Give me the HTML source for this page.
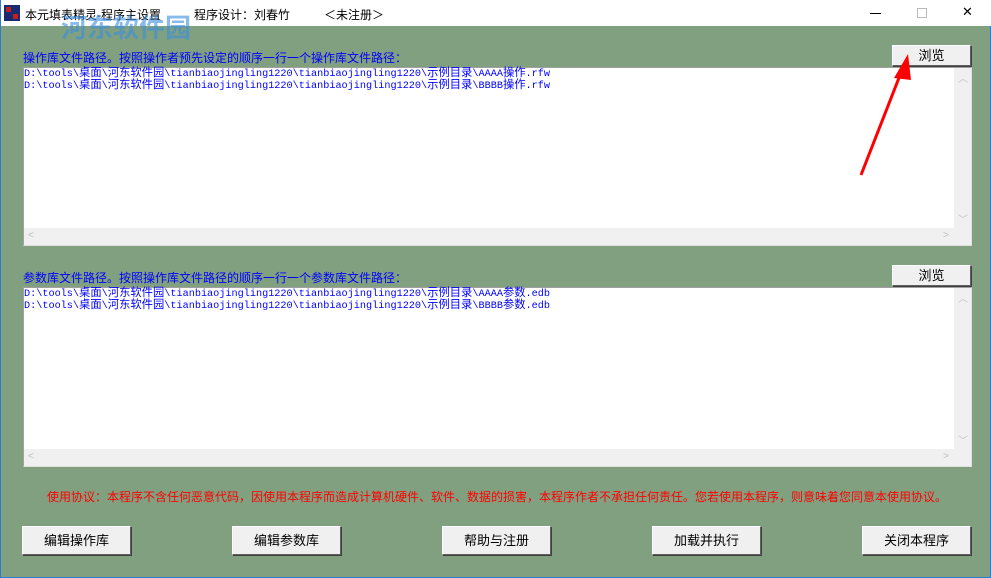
<!DOCTYPE html>
<html><head><meta charset="utf-8"><style>
*{margin:0;padding:0;box-sizing:border-box}
body{width:991px;height:578px;background:#80a080;position:relative;overflow:hidden;font-family:"Liberation Sans","Noto Sans CJK SC",sans-serif;border:1px solid #2b7bd0;border-top:none}
.title{position:absolute;left:0;top:0;width:991px;height:26px;background:#fff;font-size:12px;color:#000}
.title span{position:absolute;top:6px}
.abs{position:absolute}
.lbl{font-size:12px;color:#0000ff}
.box{position:absolute;background:#fff;border:1px solid #a0a0a0;border-right-color:#e0e0e0;border-bottom-color:#e0e0e0}
.box pre{font-family:"Liberation Mono","Noto Sans CJK SC",monospace;font-size:10.2px;line-height:12px;color:#0000ff;padding:1px 0 0 0}
.box pre b{font-weight:normal;font-size:11.3px;line-height:11px}
.vs{position:absolute;right:0;top:0;width:17px;bottom:17px;background:#f0f0f0}
.hs{position:absolute;left:0;right:0;bottom:0;height:17px;background:#f0f0f0}
.btn{position:absolute;background:#f0f0f0;border:1px solid;border-color:#fff #606060 #606060 #fff;box-shadow:1px 1px 0 #404040;font-size:13px;text-align:center;color:#000}
.ar{position:absolute;color:#c0c0c0;font-size:10px}
</style></head><body>
<div class="title">
<div class="abs" style="left:3px;top:5px;width:16px;height:16px;background:#1a2a70"><div class="abs" style="left:2px;top:2px;width:5px;height:5px;background:#c02020"></div><div class="abs" style="left:9px;top:9px;width:5px;height:5px;background:#c02020"></div></div>
<span style="left:24px">本元填表精灵-程序主设置</span>
<span style="left:193px">程序设计：刘春竹</span>
<span style="left:323px">＜未注册＞</span>
<div class="abs" style="left:869px;top:13px;width:11px;height:1px;background:#000"></div>
<div class="abs" style="left:916px;top:8px;width:10px;height:10px;border:1px solid #bbb"></div>
<span style="left:961px;top:4px;font-size:13px">✕</span>
</div>
<div class="abs" style="left:60px;top:8px;font-size:26px;font-weight:bold;color:#3a8ee0;opacity:.6">河东软件园</div>
<div class="abs lbl" style="left:22px;top:49px">操作库文件路径。按照操作者预先设定的顺序一行一个操作库文件路径：</div>
<div class="btn" style="left:891px;top:45px;width:79px;height:21px;line-height:19px">浏览</div>
<div class="box" style="left:22px;top:67px;width:949px;height:179px"><pre>D:\tools\<b>桌面</b>\<b>河东软件园</b>\tianbiaojingling1220\tianbiaojingling1220\<b>示例目录</b>\AAAA<b>操作</b>.rfw
D:\tools\<b>桌面</b>\<b>河东软件园</b>\tianbiaojingling1220\tianbiaojingling1220\<b>示例目录</b>\BBBB<b>操作</b>.rfw</pre>
<div class="vs"><span class="ar" style="left:4px;top:2px">︿</span><span class="ar" style="left:4px;bottom:2px">﹀</span></div><div class="hs"><span class="ar" style="left:4px;top:2px">&lt;</span><span class="ar" style="right:22px;top:2px">&gt;</span></div></div>
<div class="abs lbl" style="left:22px;top:269px">参数库文件路径。按照操作库文件路径的顺序一行一个参数库文件路径：</div>
<div class="btn" style="left:891px;top:265px;width:79px;height:21px;line-height:19px">浏览</div>
<div class="box" style="left:22px;top:287px;width:949px;height:180px"><pre>D:\tools\<b>桌面</b>\<b>河东软件园</b>\tianbiaojingling1220\tianbiaojingling1220\<b>示例目录</b>\AAAA<b>参数</b>.edb
D:\tools\<b>桌面</b>\<b>河东软件园</b>\tianbiaojingling1220\tianbiaojingling1220\<b>示例目录</b>\BBBB<b>参数</b>.edb</pre>
<div class="vs"><span class="ar" style="left:4px;top:2px">︿</span><span class="ar" style="left:4px;bottom:2px">﹀</span></div><div class="hs"><span class="ar" style="left:4px;top:2px">&lt;</span><span class="ar" style="right:22px;top:2px">&gt;</span></div></div>
<div class="abs" style="left:46px;top:488px;font-size:12px;color:#ff0000">使用协议：本程序不含任何恶意代码，因使用本程序而造成计算机硬件、软件、数据的损害，本程序作者不承担任何责任。您若使用本程序，则意味着您同意本使用协议。</div>
<div class="btn" style="left:21px;top:526px;width:109px;height:29px;line-height:27px">编辑操作库</div>
<div class="btn" style="left:231px;top:526px;width:109px;height:29px;line-height:27px">编辑参数库</div>
<div class="btn" style="left:441px;top:526px;width:109px;height:29px;line-height:27px">帮助与注册</div>
<div class="btn" style="left:651px;top:526px;width:109px;height:29px;line-height:27px">加载并执行</div>
<div class="btn" style="left:861px;top:526px;width:109px;height:29px;line-height:27px">关闭本程序</div>
<svg class="abs" style="left:855px;top:50px" width="60" height="130"><line x1="5" y1="125" x2="48" y2="15" stroke="#ff0000" stroke-width="3"/><polygon points="52,4 38,28 55,30" fill="#ff0000"/></svg>
</body></html>
